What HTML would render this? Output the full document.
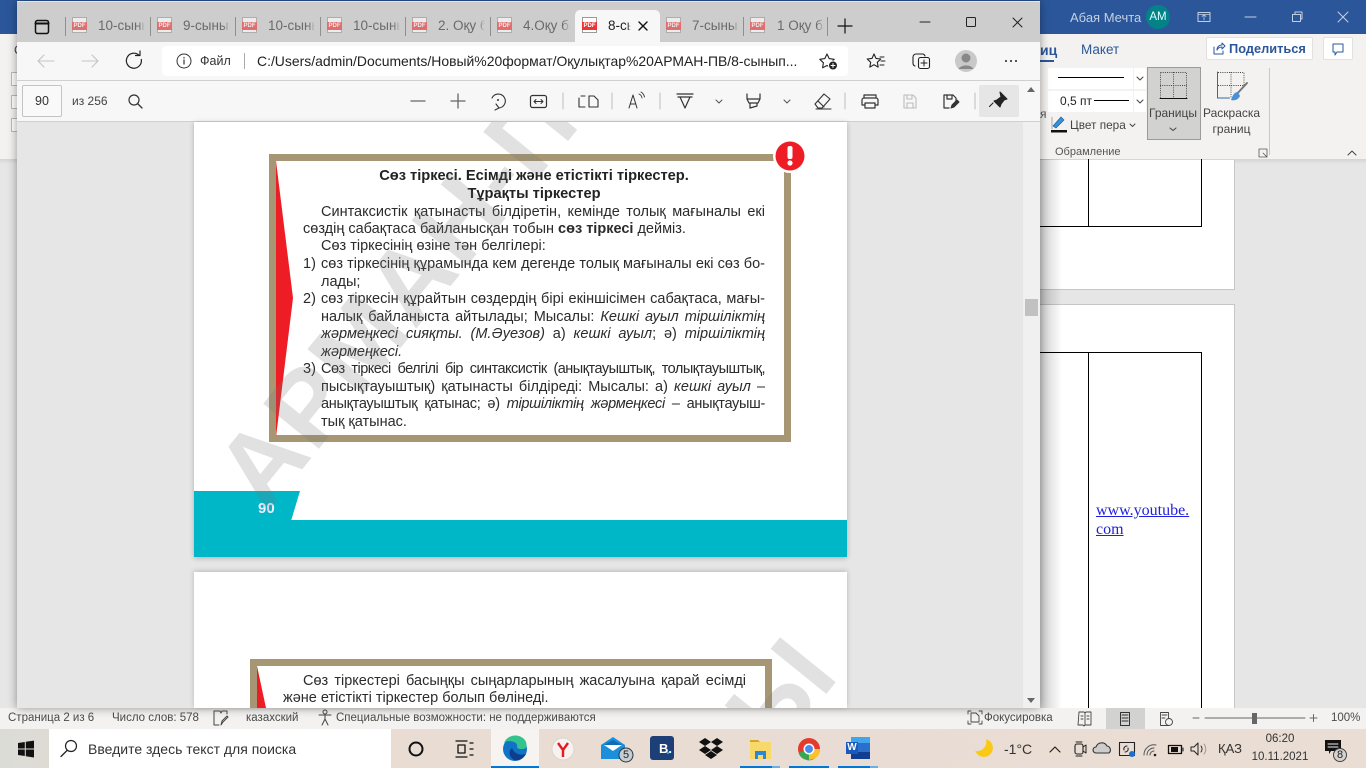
<!DOCTYPE html>
<html lang="ru"><head><meta charset="utf-8"><title>PDF</title>
<style>
html,body{margin:0;padding:0;width:1366px;height:768px;overflow:hidden;background:#e6e6e6;font-family:"Liberation Sans","Noto Sans CJK SC",sans-serif}
div,span.a{position:absolute}
.r{position:absolute}
.t{position:absolute;white-space:nowrap}
.pdf{position:absolute;width:15px;height:16px;background:#fff;border:1px solid #9a9a9a;box-sizing:border-box;opacity:.62;top:17px}
.pdf b{position:absolute;left:-1px;top:4px;width:15px;height:8px;background:#e33;color:#fff;font:bold 6px/8px "Liberation Sans",sans-serif;text-align:center}
.tab{position:absolute;top:18px;height:16px;font-size:13.5px;line-height:16px;color:#6a6a6a;width:47px;overflow:hidden;white-space:nowrap;-webkit-mask-image:linear-gradient(90deg,#000 85%,transparent);mask-image:linear-gradient(90deg,#000 85%,transparent)}
.sep{position:absolute;top:17px;width:1px;height:19px;background:#8f8f8f}
.l{position:absolute;left:321px;width:444px;height:17px;margin-top:1px;font-size:14.5px;line-height:17px;color:#2b2b2b;white-space:nowrap;text-align:justify;text-align-last:justify}
.n{text-align-last:left;text-align:left}
.st{position:absolute;top:711px;font-size:11.5px;line-height:14px;color:#4a4a4a;white-space:nowrap}
</style></head>
<body>
<!-- WORD BACKGROUND -->
<div style="left:0;top:0;width:1366px;height:34px;background:#2b579a"></div>
<div style="left:0;top:34px;width:1366px;height:125px;background:#f3f2f1"></div>
<div style="left:0;top:159px;width:1366px;height:5px;background:linear-gradient(#d4d4d4,#e6e6e6)"></div>
<div style="left:1040px;top:160px;width:194px;height:129px;background:#fff;border-right:1px solid #c6c6c6;border-bottom:1px solid #c6c6c6"></div>
<div style="left:1040px;top:304px;width:194px;height:404px;background:#fff;border-right:1px solid #c6c6c6;border-top:1px solid #c6c6c6"></div>
<div style="left:1040px;top:159px;width:48px;height:67px;border-right:1px solid #000;border-bottom:1px solid #000"></div>
<div style="left:1088px;top:159px;width:113px;height:67px;border-right:1px solid #000;border-bottom:1px solid #000"></div>
<div style="left:1040px;top:352px;width:161px;height:1px;background:#000"></div>
<div style="left:1088px;top:352px;width:1px;height:356px;background:#000"></div>
<div style="left:1201px;top:352px;width:1px;height:356px;background:#000"></div>
<div class="t" style="left:1096px;top:501px;font:16px/19px 'Liberation Serif',serif;color:#1f1fe0;text-decoration:underline">www.youtube.<br>com</div>
<div style="left:1040px;top:159px;width:22px;height:549px;background:linear-gradient(90deg,rgba(0,0,0,.2),rgba(0,0,0,0))"></div>

<!-- Word title -->
<div class="t" style="left:1070px;top:10px;font-size:13px;line-height:16px;color:#c3d0e4">Абая Мечта</div>
<div style="left:1146px;top:5px;width:24px;height:24px;border-radius:12px;background:#038387;color:#dff;font-size:11.5px;line-height:24px;text-align:center">АМ</div>
<!-- Word tabs -->
<div class="t" style="left:1040px;top:41px;font-size:14px;line-height:18px;font-weight:bold;color:#2b579a">иц</div>
<div style="left:1040px;top:60px;width:14px;height:2px;background:#2b579a"></div>
<div class="t" style="left:1081px;top:41px;font-size:13.5px;line-height:18px;color:#2b579a">Макет</div>
<div style="left:1206px;top:37px;width:107px;height:23px;background:#fff;border:1px solid #e2e1df;box-sizing:border-box;border-radius:2px"></div>
<div class="t" style="left:1229px;top:41px;font-size:12.8px;line-height:16px;font-weight:bold;color:#2b579a">Поделиться</div>
<div style="left:1323px;top:37px;width:30px;height:23px;background:#fff;border:1px solid #e2e1df;box-sizing:border-box;border-radius:2px"></div>
<!-- Ribbon -->
<div style="left:1048px;top:68px;width:85px;height:21px;background:#fff"></div>
<div style="left:1134px;top:68px;width:12px;height:21px;background:#fff"></div>
<div style="left:1048px;top:91px;width:85px;height:21px;background:#fff"></div>
<div style="left:1134px;top:91px;width:12px;height:21px;background:#fff"></div>
<div style="left:1058px;top:77px;width:66px;height:1px;background:#000"></div>
<div style="left:1094px;top:100px;width:35px;height:1px;background:#000"></div>
<div class="t" style="left:1060px;top:93px;font-size:12px;line-height:16px;color:#222">0,5 пт</div>
<div class="t" style="left:1070px;top:117px;font-size:11.8px;line-height:16px;color:#444">Цвет пера</div>
<div class="t" style="left:1040px;top:106px;font-size:12px;line-height:16px;color:#555">я</div>
<div style="left:1147px;top:67px;width:54px;height:73px;background:#d2d2d0;border:1px solid #9b9b9b;box-sizing:border-box"></div>
<div class="t" style="left:1149px;top:105px;font-size:12px;line-height:16px;color:#444">Границы</div>
<div class="t" style="left:1203px;top:105px;width:57px;text-align:center;font-size:12px;line-height:16px;color:#444">Раскраска<br>границ</div>
<div style="left:1269px;top:68px;width:1px;height:87px;background:#c9c8c6"></div>
<div class="t" style="left:1055px;top:145px;font-size:11px;line-height:14px;color:#555">Обрамление</div>
<!-- left sliver -->
<div class="t" style="left:14px;top:43px;font-size:12px;color:#444;line-height:14px">С</div>
<div style="left:11px;top:72px;width:8px;height:12px;border:1px solid #bbb;background:#fff"></div>
<div style="left:11px;top:95px;width:8px;height:12px;border:1px solid #bbb;background:#fff"></div>
<div style="left:11px;top:118px;width:8px;height:12px;border:1px solid #bbb;background:#fff"></div>

<!-- STATUS BAR -->
<div style="left:0;top:708px;width:1366px;height:21px;background:#f3f2f1"></div>
<div style="left:1106px;top:708px;width:39px;height:21px;background:#d2d2d0"></div>
<div class="st" style="left:8px">Страница 2 из 6</div>
<div class="st" style="left:112px">Число слов: 578</div>
<div class="st" style="left:246px">казахский</div>
<div class="st" style="left:336px">Специальные возможности: не поддерживаются</div>
<div class="st" style="left:984px">Фокусировка</div>
<div class="st" style="left:1331px">100%</div>

<!-- TASKBAR -->
<div style="left:0;top:729px;width:1366px;height:39px;background:linear-gradient(90deg,#dcdcd7 0,#dedbd5 48px,#e8dcd3 400px,#e9ddd4 100%)"></div>
<div style="left:49px;top:729px;width:342px;height:39px;background:#fff"></div>
<div class="t" style="left:88px;top:740px;font-size:14px;line-height:18px;color:#333">Введите здесь текст для поиска</div>
<div style="left:491px;top:729px;width:48px;height:39px;background:#f6f3f0"></div>
<div style="left:491px;top:766px;width:48px;height:2px;background:#0078d7"></div>
<div style="left:740px;top:766px;width:32px;height:2px;background:#0078d7"></div><div style="left:772px;top:766px;width:8px;height:2px;background:#6ab0e8"></div>
<div style="left:789px;top:766px;width:40px;height:2px;background:#0078d7"></div>
<div style="left:838px;top:766px;width:32px;height:2px;background:#0078d7"></div><div style="left:870px;top:766px;width:8px;height:2px;background:#6ab0e8"></div>
<div class="t" style="left:1004px;top:740px;font-size:14px;line-height:18px;color:#333">-1°C</div>
<div class="t" style="left:1218px;top:741px;font-size:13px;line-height:16px;color:#333">ҚАЗ</div>
<div class="t" style="left:1240px;top:731px;width:80px;text-align:center;font-size:11.5px;line-height:16px;color:#333">06:20</div>
<div class="t" style="left:1240px;top:749px;width:80px;text-align:center;font-size:11.5px;line-height:16px;color:#333">10.11.2021</div>

<!-- EDGE WINDOW -->
<div style="left:17px;top:1px;width:1023px;height:707px;background:#e6e6e6;box-shadow:0 0 9px rgba(0,0,0,.4)"></div>
<div style="left:17px;top:2px;width:1023px;height:40px;background:#cdcdcd"></div>
<div style="left:17px;top:42px;width:1023px;height:38px;background:#f7f7f7"></div>
<div style="left:17px;top:80px;width:1023px;height:1px;background:#d0d0d0"></div>
<div style="left:17px;top:81px;width:1023px;height:40px;background:#f7f7f7"></div>
<div style="left:17px;top:121px;width:1023px;height:1px;background:#d0d0d0"></div>
<div style="left:575px;top:10px;width:85px;height:32px;background:#f7f7f7;border-radius:5px 5px 0 0"></div>
<!-- tabs -->
<div class="sep" style="left:65px"></div><div class="sep" style="left:150px"></div><div class="sep" style="left:235px"></div><div class="sep" style="left:320px"></div><div class="sep" style="left:405px"></div><div class="sep" style="left:490px"></div><div class="sep" style="left:743px"></div><div class="sep" style="left:827px"></div>
<div class="pdf" style="left:72px"><b>PDF</b></div><div class="tab" style="left:98px">10-сынып</div>
<div class="pdf" style="left:157px"><b>PDF</b></div><div class="tab" style="left:183px">9-сынып</div>
<div class="pdf" style="left:242px"><b>PDF</b></div><div class="tab" style="left:268px">10-сынып</div>
<div class="pdf" style="left:327px"><b>PDF</b></div><div class="tab" style="left:353px">10-сынып</div>
<div class="pdf" style="left:412px"><b>PDF</b></div><div class="tab" style="left:438px">2. Оқу бағ</div>
<div class="pdf" style="left:497px"><b>PDF</b></div><div class="tab" style="left:523px">4.Оқу бағ</div>
<div class="pdf" style="left:582px;opacity:1"><b>PDF</b></div><div class="tab" style="left:608px;width:23px;color:#222">8-сынып</div>
<div class="pdf" style="left:666px"><b>PDF</b></div><div class="tab" style="left:692px">7-сынып</div>
<div class="pdf" style="left:750px"><b>PDF</b></div><div class="tab" style="left:777px">1 Оқу бағ</div>
<!-- address -->
<div style="left:162px;top:46px;width:686px;height:30px;background:#fff;border-radius:4px"></div>
<div class="t" style="left:200px;top:53px;font-size:12.5px;line-height:16px;color:#333">Файл</div>
<div style="left:244px;top:53px;width:1px;height:16px;background:#aaa"></div>
<div class="t" style="left:257px;top:53px;font-size:13.95px;line-height:16px;color:#222">C:/Users/admin/Documents/Новый%20формат/Оқулықтар%20АРМАН-ПВ/8-сынып...</div>
<!-- pdf toolbar -->
<div style="left:22px;top:85px;width:40px;height:32px;background:#f9f9f9;border:1px solid #c4c4c4;box-sizing:border-box;border-radius:2px;font-size:12.5px;line-height:30px;text-align:center;color:#333">90</div>
<div class="t" style="left:72px;top:94px;font-size:12px;line-height:15px;color:#444">из 256</div>
<div style="left:979px;top:85px;width:40px;height:32px;background:#e6e6e6;border-radius:2px"></div>
<!-- scrollbar -->
<div style="left:1023px;top:122px;width:17px;height:586px;background:#f0f0f0"></div>
<div style="left:1025px;top:299px;width:13px;height:17px;background:#c1c1c1"></div>

<!-- PDF PAGES -->
<div style="left:194px;top:122px;width:653px;height:435px;background:#fff;box-shadow:0 1px 5px rgba(0,0,0,.25)"></div>
<div style="left:194px;top:572px;width:653px;height:136px;background:#fff;box-shadow:0 -1px 5px rgba(0,0,0,.2)"></div>
<div style="left:194px;top:520px;width:653px;height:37px;background:#00b7c8"></div>

<svg class="r" style="left:0;top:0" width="1366" height="768" viewBox="0 0 1366 768">
 <polygon points="194,491 300,491 291,521 194,521" fill="#00b7c8"/>
 <rect x="272.500" y="157.500" width="515" height="281" fill="none" stroke="#a69674" stroke-width="7"/>
 <polygon points="276,161 293,298 276,437" fill="#ee1d25"/>
 <path d="M253.500 708V662.500H768.500V708" fill="none" stroke="#a69674" stroke-width="7"/>
 <polygon points="257,666 266,708 257,708" fill="#ee1d25"/>
 <circle cx="790" cy="156" r="17" fill="#fff"/><circle cx="790" cy="156" r="14.500" fill="#ee1d25"/>
 <rect x="787.500" y="146" width="5" height="13" rx="2" fill="#fff"/><circle cx="790" cy="163" r="2.600" fill="#fff"/>
</svg>

<!-- text page 1 -->
<div class="t" style="left:269px;top:168px;width:530px;text-align:center;font-size:14.65px;line-height:17px;font-weight:bold;color:#222">Сөз тіркесі. Есімді және етістікті тіркестер.</div>
<div class="t" style="left:269px;top:186px;width:530px;text-align:center;font-size:14.65px;line-height:17px;font-weight:bold;color:#222">Тұрақты тіркестер</div>
<div class="l" style="top:203px">Синтаксистік қатынасты білдіретін, кемінде толық мағыналы екі</div>
<div class="l n" style="top:220px;left:303px;">сөздің сабақтаса байланысқан тобын <b>сөз тіркесі</b> дейміз.</div>
<div class="l n" style="top:237px">Сөз тіркесінің өзіне тән белгілері:</div>
<div class="l n" style="top:255px;left:303px;width:18px">1)</div>
<div class="l" style="top:255px">сөз тіркесінің құрамында кем дегенде толық мағыналы екі сөз бо-</div>
<div class="l n" style="top:273px">лады;</div>
<div class="l n" style="top:290px;left:303px;width:18px">2)</div>
<div class="l" style="top:290px">сөз тіркесін құрайтын сөздердің бірі екіншісімен сабақтаса, мағы-</div>
<div class="l" style="top:308px">налық байланыста айтылады; Мысалы: <i>Кешкі ауыл тіршіліктің</i></div>
<div class="l" style="top:325px"><i>жәрмеңкесі сияқты. (М.Әуезов)</i> а) <i>кешкі ауыл</i>; ә) <i>тіршіліктің</i></div>
<div class="l n" style="top:343px"><i>жәрмеңкесі.</i></div>
<div class="l n" style="top:360px;left:303px;width:18px">3)</div>
<div class="l" style="top:360px;letter-spacing:-.52px">Сөз тіркесі белгілі бір синтаксистік (анықтауыштық, толықтауыштық,</div>
<div class="l" style="top:378px">пысықтауыштық) қатынасты білдіреді: Мысалы: а) <i>кешкі ауыл</i> –</div>
<div class="l" style="top:395px;letter-spacing:-.3px">анықтауыштық қатынас; ә) <i>тіршіліктің жәрмеңкесі</i> – анықтауыш-</div>
<div class="l n" style="top:413px">тық қатынас.</div>
<div class="t" style="left:258px;top:500px;font-size:15px;line-height:17px;font-weight:bold;color:#eef">90</div>
<!-- text page 2 -->
<div class="l" style="top:672px;left:303px;width:443px">Сөз тіркестері басыңқы сыңарларының жасалуына қарай есімді</div>
<div class="l n" style="top:689px;left:283px">және етістікті тіркестер болып бөлінеді.</div>

<!-- watermark -->
<svg class="r" style="left:194px;top:122px" width="653" height="586" viewBox="194 122 653 586">
 <defs><clipPath id="c1"><rect x="194" y="122" width="653" height="435"/></clipPath><clipPath id="c2"><rect x="194" y="572" width="653" height="136"/></clipPath></defs>
 <g clip-path="url(#c1)"><text transform="translate(266,514) rotate(-51)" font-family="Liberation Sans" font-weight="bold" font-size="104" letter-spacing="2" fill="#777" fill-opacity=".22">АРМАН-ПВ</text></g>
 <g clip-path="url(#c2)"><text transform="translate(776,756) rotate(-51)" font-family="Liberation Sans" font-weight="bold" font-size="104" fill="#777" fill-opacity=".22">Ы</text></g>
</svg>

<!-- ICONS -->
<svg class="r" style="left:0;top:0" width="1366" height="768" viewBox="0 0 1366 768" fill="none" stroke-linecap="round" stroke-linejoin="round">
 <!-- tab strip -->
 <g stroke="#111" stroke-width="1.500"><rect x="35.500" y="20.500" width="13" height="13" rx="2"/><path d="M35.500 23.500h13" stroke-width="2"/></g>
 <path d="M639 22l8 8M647 22l-8 8" stroke="#111" stroke-width="1.400"/>
 <path d="M838 26h14M845 19v14" stroke="#111" stroke-width="1.200"/>
 <path d="M920 22h10" stroke="#222" stroke-width="1"/><rect x="966.500" y="17.500" width="9" height="9" rx="1" stroke="#222"/><path d="M1013 18l9 9M1022 18l-9 9" stroke="#222"/>
 <!-- nav -->
 <path d="M38 61h16M38 61l6-6M38 61l6 6" stroke="#c4c4c4" stroke-width="1.100"/>
 <path d="M82 61h16M98 61l-6-6M98 61l-6 6" stroke="#c4c4c4" stroke-width="1.100"/>
 <path d="M141.300 59.500a7.500 7.500 0 1 1-2-4M140 51v4.500h-4.500" stroke="#222" stroke-width="1.200"/>
 <circle cx="184" cy="61" r="7" stroke="#333"/><path d="M184 60v4M184 57.500v.5" stroke="#333" stroke-width="1.200"/>
 <path d="M827 54l2.200 4.600 5 .7-3.600 3.500.8 5-4.400-2.300-4.400 2.300.8-5-3.600-3.500 5-.7z" stroke="#222" stroke-width="1.100"/><circle cx="833" cy="65.500" r="4.500" fill="#222" stroke="#fff"/><path d="M831 65.500h4M833 63.500v4" stroke="#fff"/>
 <path d="M874 54l2 4.400 4.800.6-3.500 3.300.9 4.800-4.200-2.400-4.200 2.400.9-4.800-3.500-3.300 4.800-.6z" stroke="#222" stroke-width="1.100"/><path d="M880 57h4M881 61h4M880 65h4" stroke="#222"/>
 <path d="M915 66a3 3 0 0 1-2-3v-6a3 3 0 0 1 3-3h7a3 3 0 0 1 2 2" stroke="#222" stroke-width="1.100"/><rect x="918.500" y="57.500" width="11" height="11" rx="2" stroke="#222" stroke-width="1.100"/><path d="M924 60v6M921 63h6" stroke="#222"/>
 <circle cx="966" cy="61" r="11" fill="#c9c9c9"/><circle cx="966" cy="58" r="4.500" fill="#888"/><path d="M958.500 69a8 5.500 0 0 1 15 0z" fill="#888"/>
 <g fill="#222"><circle cx="1006" cy="61" r="1"/><circle cx="1011" cy="61" r="1"/><circle cx="1016" cy="61" r="1"/></g>
 <!-- pdf toolbar -->
 <circle cx="134" cy="100" r="5" stroke="#333" stroke-width="1.200"/><path d="M138 104l4 4" stroke="#333" stroke-width="1.300"/>
 <path d="M411 101h14" stroke="#666" stroke-width="1.300"/><path d="M451 101h14M458 94v14" stroke="#666" stroke-width="1.300"/>
 <path d="M492 98a7 7 0 1 1 7 10M496 104l3 4-4 2" stroke="#333" stroke-width="1.100"/><circle cx="498" cy="100" r="1" fill="#333"/>
 <rect x="530.500" y="95.500" width="16" height="12" rx="2" stroke="#333" stroke-width="1.200"/><path d="M534 101.500h9M534 101.500l2-2M534 101.500l2 2M543 101.500l-2-2M543 101.500l-2 2" stroke="#333"/>
 <path d="M563 93v16M612 93v16M660 93v16M845 93v16M975 93v16" stroke="#bcbcbc"/>
 <path d="M581 96h4M579 98v9h6M589 96h5l4 4v7h-9z" stroke="#333" stroke-width="1.100"/><path d="M589 96v11" stroke="#333"/>
 <path d="M629 108l4-13 4 13M630.500 104h5" stroke="#333" stroke-width="1"/><path d="M639 94a5 5 0 0 1 3 4M641 92a8 8 0 0 1 3.500 5" stroke="#333" stroke-width=".9"/>
 <path d="M677 94h16M678 97h14M680 97l5 11 5-11" stroke="#333" stroke-width="1.200"/>
 <path d="M716 100l3 3 3-3M784 100l3 3 3-3" stroke="#555"/>
 <path d="M747 94v5h13v-5M747 99l2 4h9l2-4M750 103v5l7-2v-3" stroke="#333" stroke-width="1.200"/>
 <path d="M815 104l9-10 6 5-8 9h-4zM818 101l6 6M816 109h15" stroke="#333" stroke-width="1.100"/>
 <path d="M864 98v-3h12v3M864 105h-2v-5a2 2 0 0 1 2-2h12a2 2 0 0 1 2 2v5h-2M865 103h10v5h-10z" stroke="#333" stroke-width="1.200"/>
 <path d="M904 95h9l3 3v10h-12zM907 95v4h5v-4M907 108v-5h6v5" stroke="#bbb" stroke-width="1.100"/>
 <path d="M944 95h9l3 3v4M944 95v13h5M947 95v4h5v-4" stroke="#333" stroke-width="1.200"/><path d="M951 108l1-3 5-5 2 2-5 5z" fill="#333" stroke="#333"/>
 <path d="M1000 92l7 7-3 1-3 4-1 3-6-6 3-1 4-3zM993 103l-3.500 3.500" fill="#222" stroke="#222" stroke-width="1.100"/>
 <path d="M1031 87l4 5h-8z" fill="#666"/><path d="M1031 703l4-5h-8z" fill="#666"/>
 <!-- word top -->
 <rect x="1198" y="12.500" width="12" height="9" stroke="#c3d0e4"/><path d="M1204 20v-5M1202 16.500l2-2 2 2M1198 14.500h12" stroke="#c3d0e4" stroke-width=".8"/>
 <path d="M1245 17h11" stroke="#c3d0e4"/><rect x="1292.500" y="14.500" width="8" height="7" stroke="#c3d0e4"/><path d="M1295 14v-2h7v7h-1" stroke="#c3d0e4"/><path d="M1338 12l10 10M1348 12l-10 10" stroke="#c3d0e4"/>
 <path d="M1214 47v7h9v-3M1217 50c0-3 2-5 5-5v-2l3 3-3 3v-2c-2 0-4 1-5 3z" stroke="#2b579a"/>
 <path d="M1333 44h10v8h-6l-2 3v-3h-2z" stroke="#2b579a"/>
 <!-- ribbon -->
 <path d="M1137 77l3 3 3-3M1137 100l3 3 3-3M1130 124l2.500 2.500 2.500-2.500" stroke="#444"/>
 <rect x="1051" y="130" width="16" height="2.500" fill="#111"/><path d="M1053 126l8-9 3 3-8 8z" fill="#3a8fd6" stroke="#1f5f9e" stroke-width=".7"/><path d="M1052 117v12" stroke="#777" stroke-width=".6"/>
 <g stroke="#444" stroke-dasharray="1 1.200" stroke-width=".9" stroke-linecap="butt"><path d="M1160.500 72.500h26v26M1160.500 72.500v26M1173.500 72v26M1160 85.500h27"/></g><path d="M1160 98.500h27" stroke="#111"/>
 <path d="M1170 128l3 2.500 3-2.500" stroke="#444"/>
 <g stroke="#444" stroke-dasharray="1 1.200" stroke-width=".9" stroke-linecap="butt"><path d="M1218 72.500h26v13M1231 72v26M1218 85.500h26"/></g><path d="M1217.500 72v26h12" stroke="#2b6cb0"/>
 <path d="M1247 83l-12 13" stroke="#777" stroke-width="2"/><path d="M1238 92c-3 0-5 2-7 8 3 1 7 0 9-4z" fill="#4a90d9"/>
 <path d="M1259 149h8v8h-8zM1263 153l4 4" stroke="#555" stroke-width=".8"/><path d="M1348 155l4-4 4 4" stroke="#444"/>
 <!-- statusbar -->
 <path d="M214 711h6l1 2 1-2h5v3M214 711v14h5" stroke="#444"/><path d="M221 725l1-4 5-5 1 1-5 5z" stroke="#444"/>
 <circle cx="325" cy="712" r="2" stroke="#444"/><path d="M319 715h12M325 715v4l-3 6M325 719l3 6" stroke="#444"/>
 <path d="M968 714v-3h3M979 711h3v3M982 721v3h-3M971 724h-3v-3M971 713h5l3 3v6h-8z" stroke="#444" stroke-width=".9"/>
 <path d="M1079 712h5l1 1 1-1h5v13h-6l-1 1-1-1h-5zM1085 713v12M1081 716h2M1081 719h2M1087 716h2M1087 719h2" stroke="#444" stroke-width=".9"/>
 <path d="M1120.500 712.500h9v13h-9zM1122 715h6M1122 718h6M1122 721h6" stroke="#333"/>
 <path d="M1160.500 712.500h8v13h-8zM1162 715h5M1162 718h3" stroke="#444" stroke-width=".9"/><circle cx="1169" cy="722" r="3.500" fill="#f3f2f1" stroke="#444" stroke-width=".9"/>
 <path d="M1193 718h6M1205 718h100M1310 718h7M1313.500 714.500v7" stroke="#666"/><rect x="1252" y="713" width="5" height="11" fill="#666"/>
 <!-- taskbar -->
 <g fill="#111"><path d="M18 743l6.800-1v6.500H18zM25.800 741.800L34 740.600v7.900h-8.200zM18 749.500h6.800v6.500L18 755zM25.800 749.500H34v8l-8.200-1.200z"/></g>
 <circle cx="71" cy="746" r="5.500" stroke="#222" stroke-width="1.200"/><path d="M67 750.500l-6 6" stroke="#222" stroke-width="1.300"/>
 <circle cx="416" cy="749" r="6.500" stroke="#111" stroke-width="2"/>
 <path d="M456 741h11M456 757h11M458 745h7v8h-7zM470 743h3M470 749h3M470 755h3" stroke="#111" stroke-width="1.300"/>
 <!-- edge -->
 <circle cx="515" cy="749" r="12" fill="#1173c6"/><path d="M504 743c3-8 14-10 20-4 3 3 3 7 2 9-4 2-9 1-9-1 2-5-8-8-13-4z" fill="#34c38f"/><path d="M514 760c-5-3-6-9-2-12 2 5 7 8 14 6-3 5-8 7-12 6z" fill="#0b3f8c"/>
 <!-- yandex -->
 <circle cx="563" cy="749" r="11" fill="#f7f2f0" stroke="#dcd6d2"/><path d="M558 743l5 7 5-7M563 750v7" stroke="#e31b23" stroke-width="2.400" stroke-linecap="butt"/>
 <!-- mail -->
 <path d="M601 745l12-8 12 8v14h-24z" fill="#1b8fdc"/><path d="M604 745h18l-9 6z" fill="#fff"/><path d="M604 745l9-5 9 5z" fill="#0f6cb5"/>
 <circle cx="626" cy="755" r="7" fill="#c3cdd3" stroke="#333"/>
 <!-- booking -->
 <rect x="650" y="736" width="24" height="24" rx="3" fill="#1c3f77"/>
 <circle cx="668" cy="753" r="1.200" fill="#26a3e0"/>
 <!-- dropbox -->
 <path d="M705 739l6 4-6 4-6-4zM717 739l6 4-6 4-6-4zM705 747l6 4-6 4-6-4zM717 747l6 4-6 4-6-4zM711 752l6 4-6 4-6-4z" fill="#111" transform="translate(0,-1)"/>
 <!-- explorer -->
 <path d="M750 740h8l2 2h-10z" fill="#d9a520"/><rect x="750" y="742" width="21" height="17" fill="#f7d96b"/><path d="M755 751h11v8h-3v-4h-5v4h-3z" fill="#2b88d8"/>
 <!-- chrome -->
 <circle cx="809" cy="749" r="11" fill="#e33b2e"/><path d="M809 749l-10.500 4a11 11 0 0 0 8 7z" fill="#34a853"/><path d="M809 749l8 7.500a11 11 0 0 1-10 3.700z" fill="#34a853"/><path d="M809 749h11a11 11 0 0 1-5 9.500l-6 1.500z" fill="#fbc02d"/><circle cx="809" cy="749" r="5.500" fill="#fff"/><circle cx="809" cy="749" r="4" fill="#4a8bf0"/>
 <!-- word -->
 <rect x="851" y="737" width="19" height="22" rx="1" fill="#2a6fc9"/><rect x="851" y="737" width="19" height="6" fill="#41a5ee"/><rect x="851" y="752" width="19" height="7" fill="#103f91"/><rect x="846" y="742" width="12" height="12" fill="#185abd"/>
 <!-- tray -->
 <path d="M986 739.200A9 9 0 1 1 975.400 751C981 752 988 747 986 739.200z" fill="#f9c916"/>
 <path d="M1050 752l5-5 5 5" stroke="#222" stroke-width="1.200"/>
 <rect x="1075" y="744" width="8" height="10" rx="2" stroke="#222" stroke-width="1.100"/><path d="M1083 747l3-2v8l-3-2M1076 742h6M1076 756h6" stroke="#222"/>
 <path d="M1096 753a3 3 0 0 1 0-6 6 6 0 0 1 11-1 4 4 0 0 1 2 7z" fill="#ccc" stroke="#333" stroke-width="1.100"/>
 <rect x="1119.500" y="742.500" width="15" height="13" stroke="#222" stroke-width="1.100"/><path d="M1124 750a3 3 0 0 1 3-4M1128 748a3 3 0 0 1-3 4" stroke="#222"/><circle cx="1132" cy="754" r="3" fill="#1f6fd0"/>
 <path d="M1147 755a7 7 0 0 1 7-7M1144 755a10 10 0 0 1 12-10M1150 755a4 4 0 0 1 4-4" stroke="#555"/><circle cx="1155" cy="755" r="1.300" fill="#222"/>
 <rect x="1168.500" y="745.500" width="13" height="8" stroke="#111" stroke-width="1.300"/><rect x="1171" y="747" width="7" height="5" fill="#111"/><path d="M1183 748v3" stroke="#111"/>
 <path d="M1191 747h3l4-4v12l-4-4h-3zM1201 746a5 5 0 0 1 0 6" stroke="#222"/><path d="M1204 744a8 8 0 0 1 0 10" stroke="#999"/>
 <path d="M1325 740h16v11h-10l-2 3v-3h-4z" fill="#111"/><path d="M1328 744h10M1328 747h10" stroke="#eee"/>
 <circle cx="1340" cy="755" r="6.500" fill="#d6d2ce" stroke="#444"/>
</svg>
<div class="t" style="left:659px;top:741px;font-size:13px;line-height:16px;font-weight:bold;color:#fff;font-family:'Liberation Sans',sans-serif">B.</div>
<div class="t" style="left:622px;top:749px;font-size:11px;line-height:12px;color:#222;width:8px;text-align:center">5</div>
<div class="t" style="left:1336px;top:749px;font-size:11px;line-height:12px;color:#222;width:8px;text-align:center">8</div>
<div class="t" style="left:847px;top:742px;width:10px;text-align:center;font-size:10px;line-height:12px;font-weight:bold;color:#fff">W</div>
</body></html>
